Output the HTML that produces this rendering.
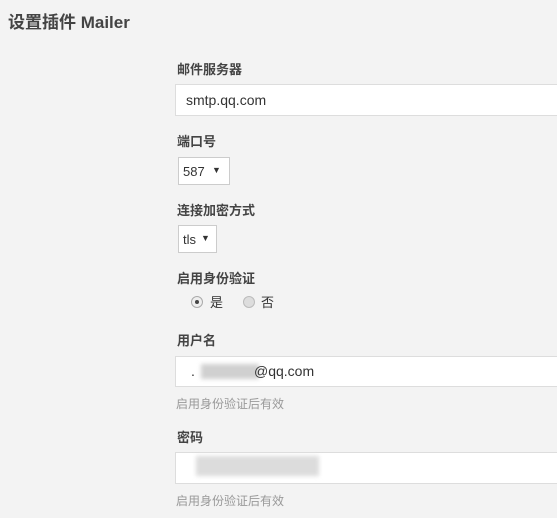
<!DOCTYPE html>
<html><head><meta charset="utf-8"><style>
body{margin:0;width:557px;height:518px;background:#f3f3f3;position:relative;overflow:hidden;font-family:"Liberation Sans","Noto Sans CJK SC",sans-serif;color:#333}
.a{position:absolute;white-space:nowrap}
.lbl{font-size:13px;font-weight:bold;color:#444;left:177px}
.inp{position:absolute;left:175px;width:390px;background:#fff;border:1px solid #ddd;box-sizing:border-box}
.sel{position:absolute;background:#fff;border:1px solid #ccc;box-sizing:border-box;font-size:13px;color:#333}
.hint{font-size:12px;color:#999;left:176px}
.blur{position:absolute;background:#d0d0d0;filter:blur(2px)}
</style></head><body>
<div class="a" style="left:8px;top:8px;font-size:17px;font-weight:bold;color:#444">设置插件 Mailer</div>
<div class="a lbl" style="top:59px">邮件服务器</div>
<div class="inp" style="top:84px;height:32px"><span class="a" style="left:10px;top:7px;font-size:14px">smtp.qq.com</span></div>
<div class="a lbl" style="top:131px">端口号</div>
<div class="sel" style="left:178px;top:157px;width:52px;height:28px"><span class="a" style="left:4px;top:6px">587</span><span class="a" style="left:33px;top:7px;font-size:9px">▼</span></div>
<div class="a lbl" style="top:200px">连接加密方式</div>
<div class="sel" style="left:178px;top:225px;width:39px;height:28px"><span class="a" style="left:4px;top:6px">tls</span><span class="a" style="left:22px;top:7px;font-size:9px">▼</span></div>
<div class="a lbl" style="top:268px">启用身份验证</div>
<div class="a" style="left:191px;top:296px;width:10px;height:10px;border-radius:50%;border:1px solid #aaa;background:#eee"><div style="margin:3px;width:4px;height:4px;border-radius:50%;background:#444"></div></div>
<div class="a" style="left:210px;top:292px;font-size:13px">是</div>
<div class="a" style="left:243px;top:296px;width:10px;height:10px;border-radius:50%;border:1px solid #bbb;background:#ddd"></div>
<div class="a" style="left:261px;top:292px;font-size:13px">否</div>
<div class="a lbl" style="top:330px">用户名</div>
<div class="inp" style="top:356px;height:31px"><span class="a" style="left:15px;top:6px;font-size:14px">.</span><div class="blur" style="left:25px;top:7px;width:58px;height:15px"></div><span class="a" style="left:78px;top:6px;font-size:14px">@qq.com</span></div>
<div class="a hint" style="top:395px">启用身份验证后有效</div>
<div class="a lbl" style="top:427px">密码</div>
<div class="inp" style="top:452px;height:32px"><div class="blur" style="left:20px;top:3px;width:123px;height:20px;background:#dcdcdc"></div></div>
<div class="a hint" style="top:492px">启用身份验证后有效</div>
</body></html>
